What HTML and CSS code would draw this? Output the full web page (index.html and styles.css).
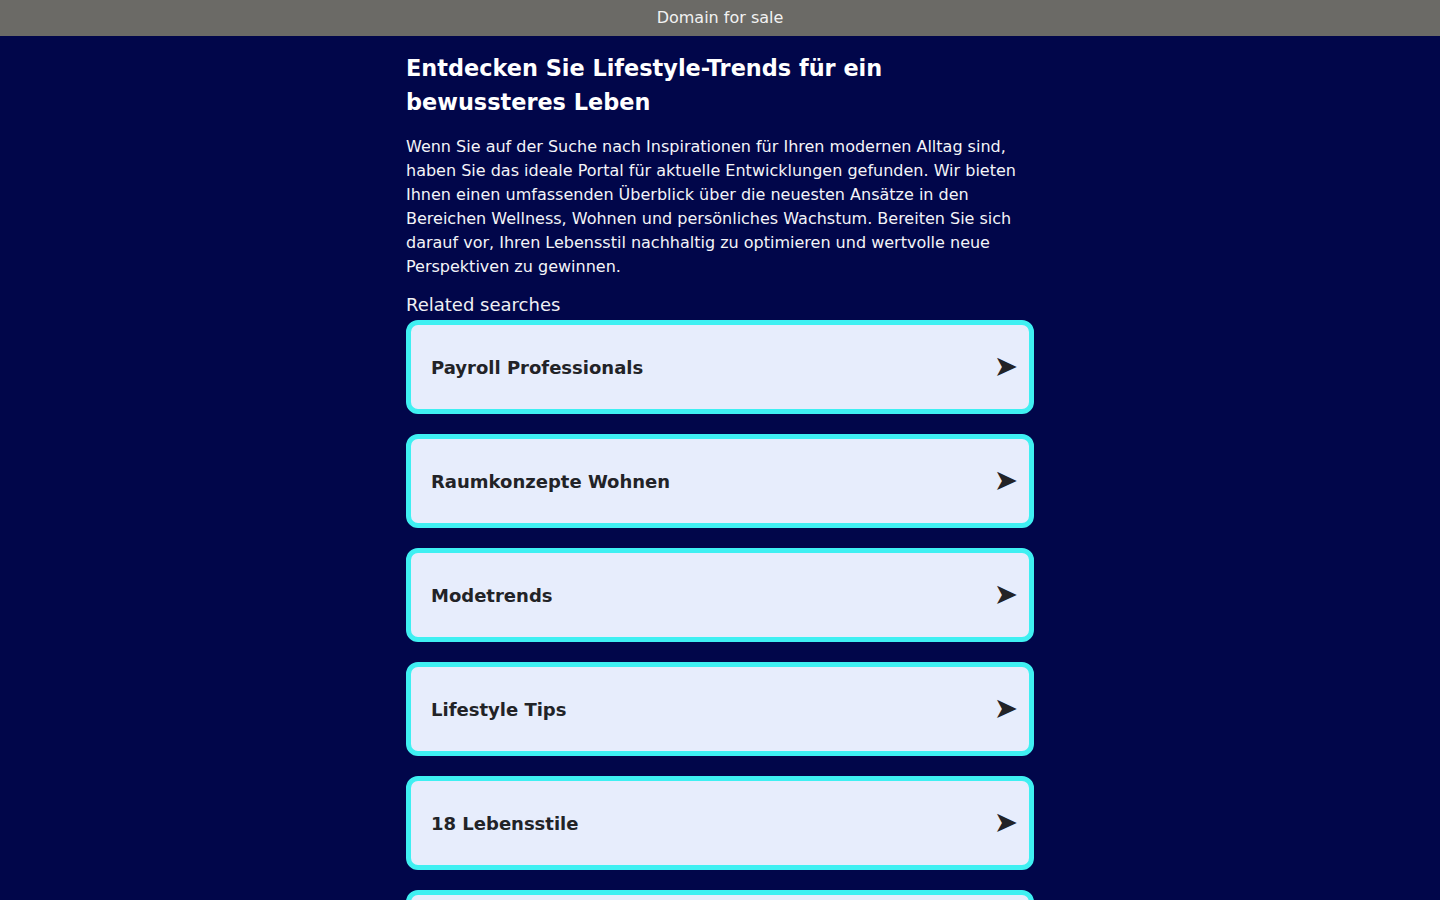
FILE: index.html
```html
<!DOCTYPE html>
<html lang="de">
<head>
<meta charset="utf-8">
<title>Domain for sale</title>
<link rel="stylesheet" href="styles.css">
</head>
<body>
<div class="topbar">Domain for sale</div>
<main class="content">
  <h1 class="title">Entdecken Sie Lifestyle-Trends für ein bewussteres Leben</h1>
  <p class="intro">Wenn Sie auf der Suche nach Inspirationen für Ihren modernen Alltag sind, haben Sie das ideale Portal für aktuelle Entwicklungen gefunden. Wir bieten Ihnen einen umfassenden Überblick über die neuesten Ansätze in den Bereichen Wellness, Wohnen und persönliches Wachstum. Bereiten Sie sich darauf vor, Ihren Lebensstil nachhaltig zu optimieren und wertvolle neue Perspektiven zu gewinnen.</p>
  <div class="related">Related searches</div>
  <div class="list">
    <a class="card" href="#"><span class="label">Payroll Professionals</span><span class="arrow">➤</span></a>
    <a class="card" href="#"><span class="label">Raumkonzepte Wohnen</span><span class="arrow">➤</span></a>
    <a class="card" href="#"><span class="label">Modetrends</span><span class="arrow">➤</span></a>
    <a class="card" href="#"><span class="label">Lifestyle Tips</span><span class="arrow">➤</span></a>
    <a class="card" href="#"><span class="label">18 Lebensstile</span><span class="arrow">➤</span></a>
    <a class="card" href="#"><span class="label">Wellness Trends</span><span class="arrow">➤</span></a>
  </div>
</main>
</body>
</html>
```
FILE: styles.css
```css
html, body {
  margin: 0;
  padding: 0;
}
body {
  background: #01064a;
  color: #ffffff;
  font-family: "DejaVu Sans", "Liberation Sans", sans-serif;
}
.topbar {
  height: 36px;
  line-height: 35px;
  background: #6b6a66;
  color: #f2f2f2;
  text-align: center;
  font-size: 16px;
}
.content {
  width: 628px;
  margin: 0 auto;
  padding-top: 15px;
}
.title {
  margin: 0;
  font-size: 22.4px;
  line-height: 34px;
  font-weight: bold;
  color: #ffffff;
}
.intro {
  margin: 16px 0 0;
  font-size: 16px;
  line-height: 24px;
  color: #f4f4f8;
}
.related {
  margin-top: 14px;
  font-size: 18px;
  line-height: 24px;
  color: #f0f0f4;
}
.list {
  margin-top: 3px;
  display: flex;
  flex-direction: column;
  gap: 20px;
}
.card {
  display: flex;
  align-items: center;
  justify-content: space-between;
  height: 84px;
  padding: 0 11px 0 20px;
  background: #e7edfc;
  border: 5px solid #3ff0f2;
  border-radius: 12px;
  text-decoration: none;
  color: #222327;
}
.label {
  font-size: 18px;
  font-weight: bold;
}
.arrow {
  font-size: 29px;
  line-height: 1;
  margin-bottom: 2px;
  color: #222327;
}
```
